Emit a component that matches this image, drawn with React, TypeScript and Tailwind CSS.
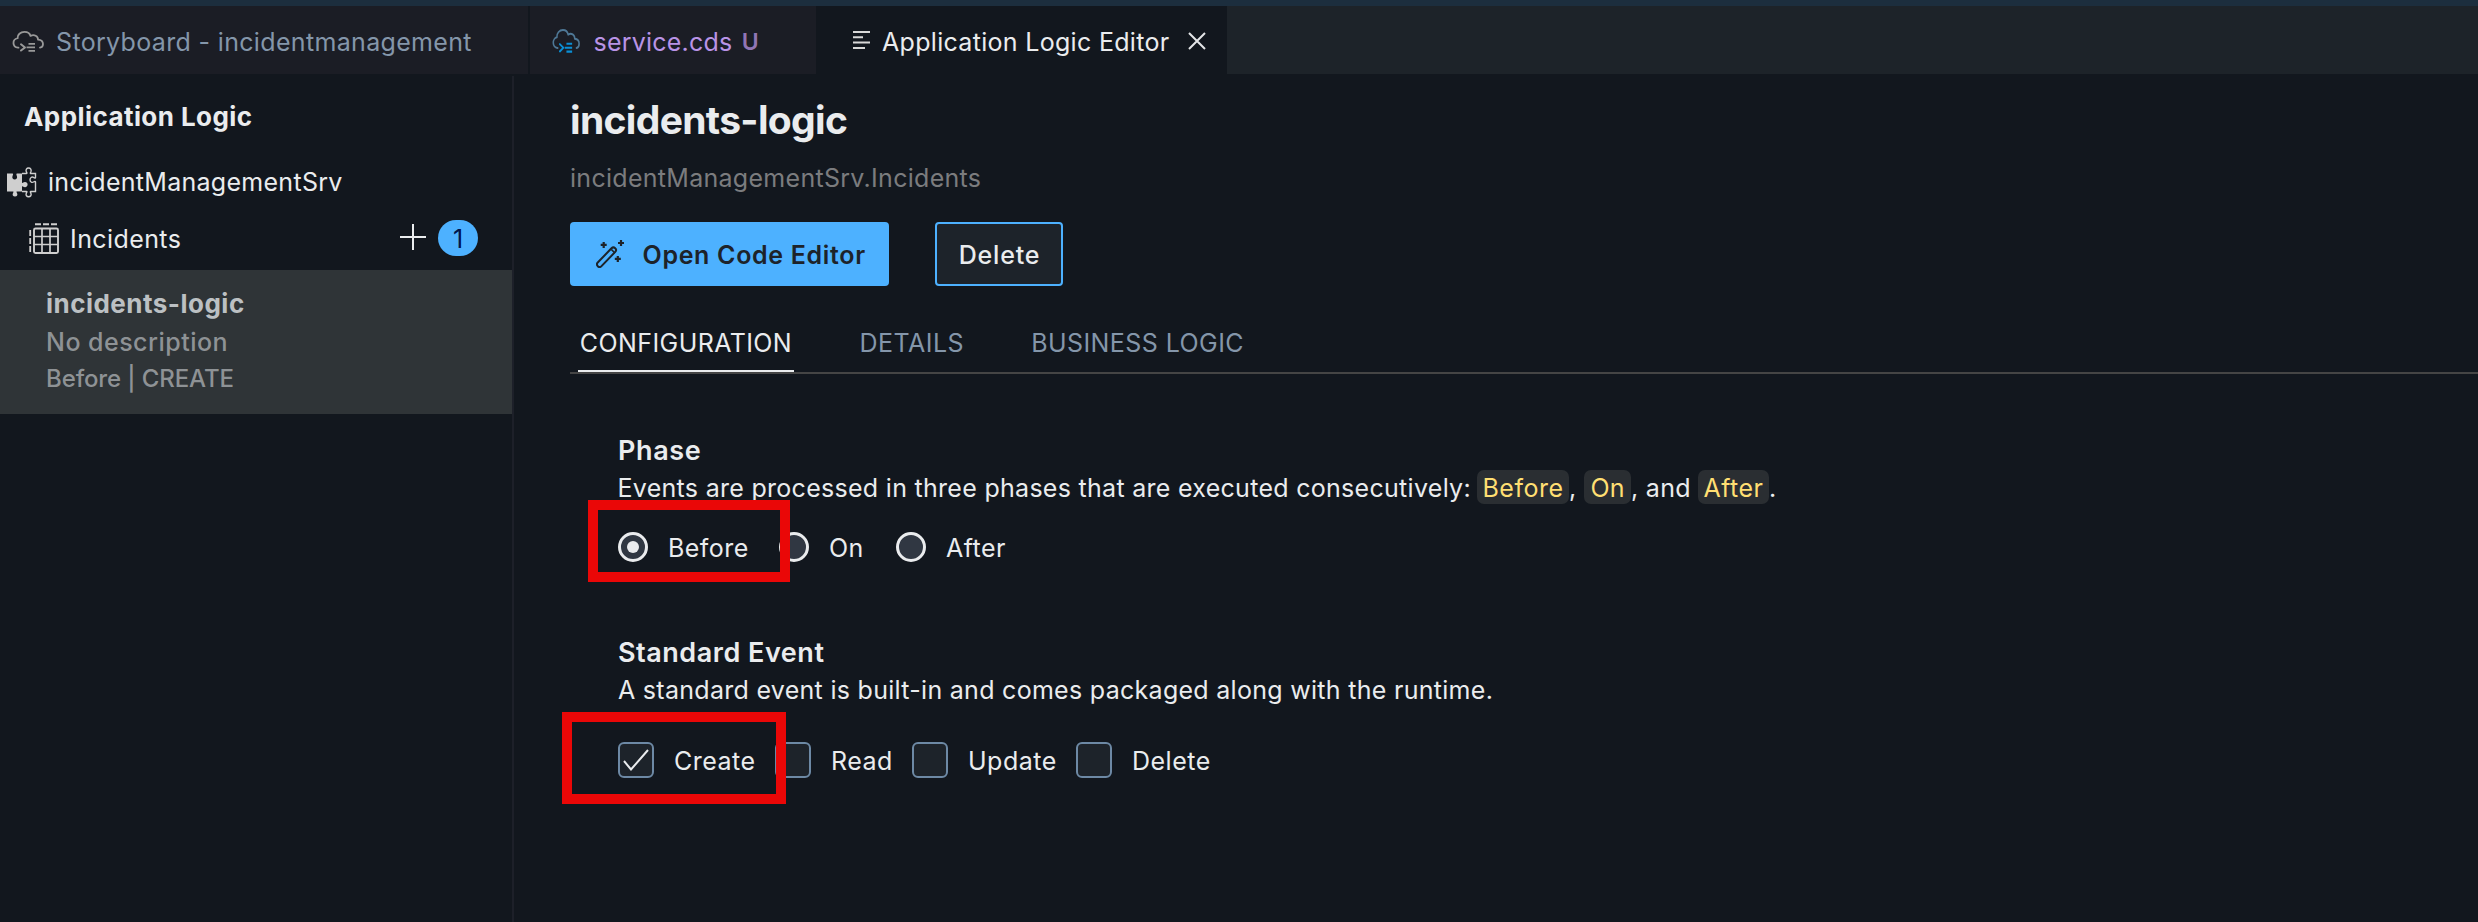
import type { ReactNode } from "react";

function CloudCode({ className, cloud, code }: { className: string; cloud: string; code: string }) {
  return (
    <svg viewBox="0 0 32 22" preserveAspectRatio="none" className={className} fill="none" strokeLinecap="round" strokeLinejoin="round">
      <path d="M6.5 17.5H6A5 5 0 0 1 5.600 7.600C5.200 3.800 8.500 1 12.500 1C15.600 1 17.900 2.900 18.500 5.200C22 3.200 26.200 5.300 26 9C29 9.300 31 11.200 31 13.600C31 15.700 29.800 17.200 28 17.500" stroke={cloud} strokeWidth="1.8" />
      <path d="M9 14L13 17.200L9 20.500" stroke={code} strokeWidth="2" />
      <path d="M16.500 13.500H23M14.500 17.200H23M16.500 20.800H23" stroke={code} strokeWidth="2" strokeLinecap="butt" />
    </svg>
  );
}

function PuzzleIcon() {
  return (
    <svg viewBox="0 0 31 31" className="h-[31px] w-[31px] shrink-0" fill="none">
      <path
        d="M1 6.500H6.500C7.500 6.500 7 8 6.500 9C5.800 11 7 12.500 8.700 12.500S11.600 11 10.900 9C10.400 8 10 6.500 11 6.500H16V16C17 16.200 17.200 15 19 15C20.600 15 21.600 16.200 21.600 17.600S20.600 20.200 19 20.200C17.300 20.200 17 19 16 19.300V24.500H11C10.200 24.500 10.500 25.200 11 26C12 28 11 29.600 9 29.600S6 28 7 26C7.500 25.200 7.700 24.500 7 24.500H1Z"
        fill="#cfcfcf"
      />
      <path
        d="M16 6.500H20.500C21.300 6.500 20.700 5.500 20.300 4.700C19.500 2.700 20.700 1 22.600 1S25.700 2.700 24.900 4.700C24.500 5.500 24 6.500 24.800 6.500H29.500V10.500C29.500 11.500 28.500 11 27.500 10.400C25.800 9.500 24 10.700 24 12.700S25.800 16 27.500 15C28.500 14.400 29.500 14 29.500 15V24.500H24.800C24 24.500 24.500 25.300 24.900 26.200C25.700 28.200 24.500 29.800 22.600 29.800S19.500 28.200 20.300 26.200C20.700 25.300 21.300 24.500 20.500 24.500H16"
        stroke="#cfcfcf"
        strokeWidth="1.400"
      />
    </svg>
  );
}

function EntityIcon() {
  return (
    <svg viewBox="0 0 30 31" className="h-[31px] w-[30px] shrink-0" fill="none" stroke="#cfcfcf">
      <rect x="5" y="5.500" width="24" height="24.500" rx="1.500" strokeWidth="1.900" />
      <path d="M5 13.500H29M5 21.500H29M13 5.500V30M21 5.500V30" strokeWidth="1.700" />
      <path d="M6 1.200H12M14 1.200H20M22 1.200H28" strokeWidth="1.900" />
      <path d="M1.200 7V13M1.200 15V21M1.200 23V29" strokeWidth="1.800" />
    </svg>
  );
}

function WandIcon() {
  return (
    <svg viewBox="0 0 28 28" className="h-7 w-7 shrink-0" fill="none" stroke="#1d232a">
      <rect x="-12.500" y="-2.600" width="25" height="5.200" rx="2.600" transform="translate(10.500 17.200) rotate(-46)" strokeWidth="2" />
      <path d="M15.300 9.400L18.900 13" strokeWidth="1.500" />
      <path d="M7.700 1.900V7.900M4.700 4.900H10.700M25 0V6M22 3H28M21.800 15.900V21.900M18.800 18.900H24.800" strokeWidth="2.200" />
    </svg>
  );
}

function Chip({ children, className }: { children: ReactNode; className: string }) {
  return <span className={`flex h-[34px] items-center justify-center rounded-[7px] bg-[#2a2e32] pt-0.5 text-[#ffdf72] ${className}`}>{children}</span>;
}

function Radio({ label, checked, className }: { label: string; checked?: boolean; className: string }) {
  return (
    <label className={`flex shrink-0 items-center ${className}`}>
      <span className="flex h-[30px] w-[30px] items-center justify-center rounded-full border-[3px] border-[#eaecee] bg-[#303742]">
        {checked && <span className="h-3 w-3 rounded-full bg-[#eaecee]" />}
      </span>
      <span className="ml-5 pt-0.5 tracking-[0.018em]">{label}</span>
    </label>
  );
}

function Checkbox({ label, checked, className }: { label: string; checked?: boolean; className: string }) {
  return (
    <label className={`flex shrink-0 items-center ${className}`}>
      <span className="flex h-9 w-9 items-center justify-center rounded-[6px] border-2 border-[#6d89a5] bg-[#1d232a]">
        {checked && (
          <svg viewBox="0 0 26 22" className="h-[22px] w-[26px]" fill="none" stroke="#eaecee" strokeWidth="2">
            <path d="M1 12L8 20.500L25 1" />
          </svg>
        )}
      </span>
      <span className="ml-5 pt-0.5 tracking-[0.02em]">{label}</span>
    </label>
  );
}

function TabBar() {
  return (
    <header className="flex h-[74px] shrink-0 border-t-[6px] border-[#1c2e3e] bg-[#1d2329]">
      <div className="flex w-[530px] items-center border-r-2 border-[#12171e] bg-[#1b1d25] pl-3 text-[#8496aa]">
        <CloudCode className="mt-0.5 h-[21px] w-8" cloud="#999999" code="#999999" />
        <span className="ml-3 pt-1 tracking-[0.0134em]">Storyboard - incidentmanagement</span>
      </div>
      <div className="flex w-[286px] items-center bg-[#1b1d25] pl-[22px] text-[#b993e6]">
        <CloudCode className="mt-0.5 h-6 w-7" cloud="#4f7896" code="#0a8fd6" />
        <span className="ml-[13.5px] pt-1 tracking-[0.0083em]">service.cds</span>
        <span className="ml-[9.5px] pt-1 text-[23px] font-semibold text-[#9175b4]">U</span>
      </div>
      <div className="flex w-[411px] items-center bg-[#12171e] pl-[37px]">
        <svg viewBox="0 0 17 18" className="h-[18px] w-[17px]" stroke="#d8d8d8" strokeWidth="2">
          <path d="M0 1H17M0 6.300H10M0 11.600H17M0 17H12" />
        </svg>
        <span className="ml-3 pt-1 tracking-[0.0122em]">Application Logic Editor</span>
        <svg viewBox="0 0 18 18" className="ml-[18.5px] mt-0.5 h-[18px] w-[18px]" stroke="#e4e6e8" strokeWidth="2">
          <path d="M1 1L17 17M17 1L1 17" />
        </svg>
      </div>
    </header>
  );
}

function Sidebar() {
  return (
    <aside className="mt-0.5 flex w-[514px] shrink-0 flex-col border-r-2 border-[#1d2029]">
      <h2 className="mt-[21px] h-10 pl-6 text-[26px] leading-10 font-bold tracking-[0.0165em]">Application Logic</h2>
      <div className="mt-[17px] flex h-14 items-center pl-1.5">
        <PuzzleIcon />
        <span className="ml-[11px] tracking-[0.0114em]">incidentManagementSrv</span>
      </div>
      <div className="flex h-[60px] items-center pr-[34px] pb-1 pl-[29px]">
        <EntityIcon />
        <span className="ml-[11px] pt-px tracking-[0.0165em]">Incidents</span>
        <svg viewBox="0 0 26 26" className="-mt-0.5 ml-auto h-[26px] w-[26px]" stroke="#eaecee" strokeWidth="2">
          <path d="M13 0V26M0 13H26" />
        </svg>
        <span className="ml-3 flex h-9 w-10 items-center justify-center rounded-[18px] bg-[#4db1ff] pt-0.5 text-[#00144a]">1</span>
      </div>
      <div className="flex h-36 flex-col bg-[#2f3437] pt-[15px] pl-[46px] text-[#8e9295]">
        <span className="h-[38px] text-[26px] leading-[38px] font-bold tracking-[0.0185em] text-[#bcc0c3]">incidents-logic</span>
        <span className="h-[38px] leading-[38px] font-medium tracking-[0.0189em]">No description</span>
        <span className="h-9 text-[24px] leading-9 font-medium tracking-[-0.0047em]">Before | CREATE</span>
      </div>
    </aside>
  );
}

function PhaseSection() {
  return (
    <section className="mt-[59px] pl-12">
      <h3 className="h-9 text-[27px] leading-9 font-semibold tracking-[0.022em]">Phase</h3>
      <div className="-mt-px flex h-[38px] items-center pl-px whitespace-pre">
        <span className="-ml-1 w-[862px] pt-0.5 pl-[2.5px] tracking-[0.0116em]">Events are processed in three phases that are executed consecutively:</span>
        <Chip className="w-[92px] tracking-[0.02em]">Before</Chip>
        <span className="w-[15px] pt-0.5">,</span>
        <Chip className="w-[47px]">On</Chip>
        <span className="w-[67px] pt-0.5 tracking-[0.0116em]">, and</span>
        <Chip className="w-[71px] tracking-[0.02em]">After</Chip>
        <span className="pt-0.5">.</span>
      </div>
      <div className="relative mt-[18px] flex h-[46px] items-center">
        <Radio label="Before" checked className="w-[161px]" />
        <Radio label="On" className="w-[117px]" />
        <Radio label="After" className="w-[117px]" />
        <div className="absolute top-[-24px] left-[-30px] h-[82px] w-[202px] border-[10px] border-[#ea0707]" />
      </div>
    </section>
  );
}

function StandardEventSection() {
  return (
    <section className="mt-[65px] pl-12">
      <h3 className="h-9 text-[27px] leading-9 font-semibold tracking-[0.0195em]">Standard Event</h3>
      <p className="h-[38px] leading-[38px] tracking-[0.0116em]">A standard event is built-in and comes packaged along with the runtime.</p>
      <div className="relative mt-[33px] flex h-9 items-center">
        <Checkbox label="Create" checked className="w-[157px]" />
        <Checkbox label="Read" className="w-[137px]" />
        <Checkbox label="Update" className="w-[164px]" />
        <Checkbox label="Delete" className="w-[164px]" />
        <div className="absolute top-[-30px] left-[-56px] h-[92px] w-[224px] border-[10px] border-[#ea0707]" />
      </div>
    </section>
  );
}

export default function App() {
  return (
    <div className="flex h-screen flex-col overflow-hidden bg-[#12171e] font-['Inter',sans-serif] text-[25px] leading-[34px] whitespace-nowrap text-[#eaecee]">
      <TabBar />
      <div className="flex min-h-0 flex-1">
        <Sidebar />
        <main className="flex min-w-0 flex-1 flex-col pl-14">
          <h1 className="mt-[22px] h-12 text-[39px] leading-[48px] font-bold tracking-[-0.017em]">incidents-logic</h1>
          <p className="mt-[18px] h-8 leading-8 tracking-[0.0115em] text-[#7b7c7e]">incidentManagementSrv.Incidents</p>
          <div className="mt-7 flex h-16">
            <button className="flex w-[319px] items-center rounded-[4px] bg-[#4db1ff] pl-[26px] font-semibold text-[#1d232a]">
              <WandIcon />
              <span className="ml-[18.5px] pt-0.5 tracking-[0.0269em]">Open Code Editor</span>
            </button>
            <button className="ml-[46px] w-32 rounded-[4px] border-2 border-[#4db1ff] bg-[#1d232a] pt-0.5 pl-px font-medium tracking-[0.032em]">Delete</button>
          </div>
          <nav className="mt-7 flex h-[60px] border-b-2 border-[#454545] pl-2 text-[#8496aa]">
            <span className="flex w-[216px] items-center justify-center border-b-2 border-[#eaecee] pt-0.5 tracking-[0.0163em] text-[#eaecee]">CONFIGURATION</span>
            <span className="ml-[65.5px] flex items-center tracking-[0.0195em]">DETAILS</span>
            <span className="ml-[67px] flex items-center tracking-[0.017em]">BUSINESS LOGIC</span>
          </nav>
          <PhaseSection />
          <StandardEventSection />
        </main>
      </div>
    </div>
  );
}
